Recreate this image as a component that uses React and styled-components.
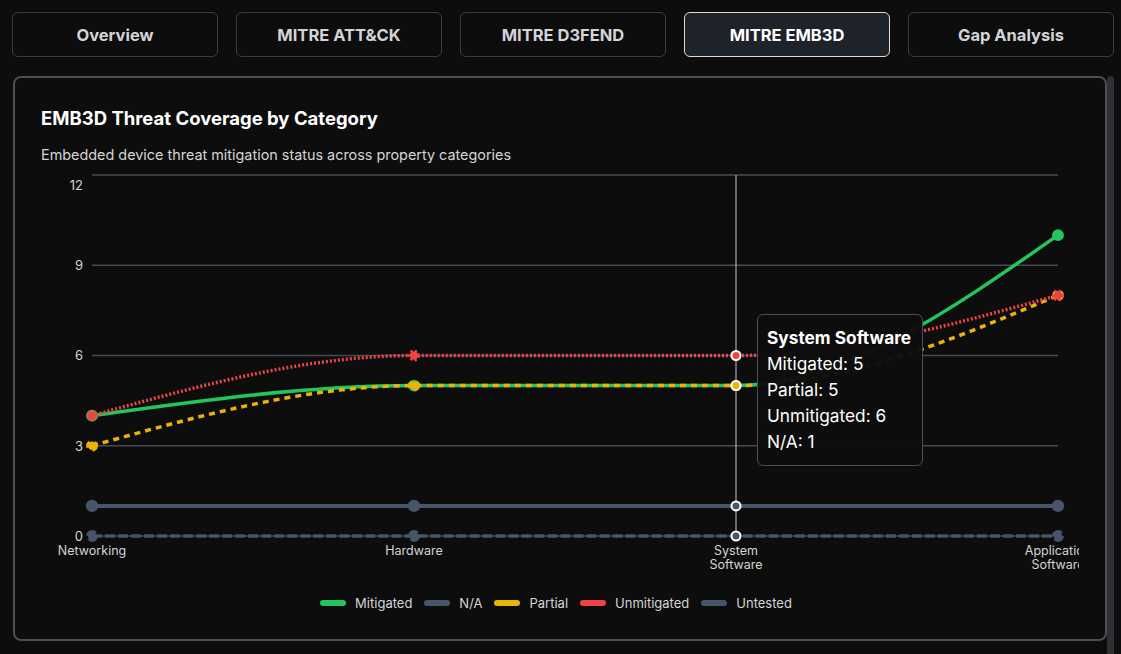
import React from 'react';
import styled, { createGlobalStyle } from 'styled-components';

const GlobalStyle = createGlobalStyle`
  html, body {
    margin: 0;
    padding: 0;
    background: #0d0d0d;
    overflow: hidden;
  }
  body {
    font-family: Inter, "Noto Sans", "Liberation Sans", sans-serif;
    color: #f5f5f5;
  }
  * { box-sizing: border-box; }
`

const Page = styled.div`
  padding: 12px 7px 0 12px;
  height: 100vh;
  display: flex;
  flex-direction: column;
`

const TabBar = styled.div`
  display: grid;
  grid-template-columns: repeat(5, 1fr);
  gap: 18px;
`

const Tab = styled.button`
  height: 45px;
  border-radius: 6px;
  border: 1px solid ${(p) => (p.$active ? '#dcdcdc' : '#3a3d42')};
  background: ${(p) => (p.$active ? '#1e232a' : 'transparent')};
  color: ${(p) => (p.$active ? '#ffffff' : '#d4d4d8')};
  font-family: inherit;
  font-size: 16.5px;
  font-weight: 700;
  cursor: pointer;
`

const ContentRow = styled.div`
  flex: 1;
  display: flex;
  margin-top: 19px;
  min-height: 0;
`

const Card = styled.section`
  flex: 1;
  align-self: flex-start;
  margin-left: 1px;
  border: 2px solid #4b4e53;
  border-radius: 8px;
  padding: 26px 26px 26px;
  background: #0d0d0d;
`

const ScrollThumb = styled.div`
  width: 7px;
  background: #2e3033;
  border-radius: 4px 4px 0 0;
`

const Title = styled.h2`
  margin: 0;
  font-size: 18.5px;
  line-height: 28px;
  font-weight: 700;
  color: #ffffff;
`

const Subtitle = styled.p`
  margin: 13px 0 0;
  font-size: 14.4px;
  line-height: 20px;
  color: #d4d4d4;
`

const ChartWrap = styled.div`
  position: relative;
  margin-top: 3px;
  height: 408px;
`

const ChartSvg = styled.svg`
  display: block;
  width: 100%;
  height: 100%;
  overflow: hidden;
`

const Tooltip = styled.div`
  position: absolute;
  width: 166px;
  padding: 10px 9px 10px;
  border: 1.5px solid #4a4e55;
  border-radius: 6px;
  background: rgba(13, 13, 13, 0.97);
  pointer-events: none;
`

const TipTitle = styled.div`
  font-size: 17.3px;
  line-height: 26px;
  font-weight: 700;
  color: #ffffff;
  white-space: nowrap;
`

const TipRow = styled.div`
  font-size: 17.3px;
  line-height: 26px;
  color: #ffffff;
  white-space: nowrap;
`

const Legend = styled.ul`
  list-style: none;
  margin: 17px 0 0;
  padding: 0 8px 0 0;
  height: 20px;
  display: flex;
  justify-content: center;
  align-items: center;
  gap: 12px;
`

const LegendItem = styled.li`
  display: flex;
  align-items: center;
  gap: 9px;
  font-size: 13px;
  color: #d4d4d4;
`

const Swatch = styled.span`
  width: 26px;
  height: 6px;
  border-radius: 3px;
  background: ${(p) => p.$color};
`

const tabs = ['Overview', 'MITRE ATT&CK', 'MITRE D3FEND', 'MITRE EMB3D', 'Gap Analysis']

const categories = [['Networking'], ['Hardware'], ['System', 'Software'], ['Application', 'Software']]

const series = [
  { key: 'Mitigated', color: '#22c55e', width: 3.5, dash: null, values: [4, 5, 5, 10] },
  { key: 'N/A', color: '#475569', width: 4, dash: null, values: [1, 1, 1, 1] },
  { key: 'Partial', color: '#eab308', width: 3.5, dash: '6 5', values: [3, 5, 5, 8] },
  { key: 'Unmitigated', color: '#ef4444', width: 3.5, dash: '2 2', values: [4, 6, 6, 8] },
  { key: 'Untested', color: '#475569', width: 3.5, dash: '10 3', values: [0, 0, 0, 0] },
]

const X0 = 51
const X1 = 1016
const Y0 = 368
const UNIT = (368 - 7) / 12
const xAt = (i) => X0 + ((X1 - X0) / 3) * i
const yAt = (v) => Y0 - v * UNIT
const ACTIVE = 2

// monotone-x curve, same maths as d3's curveMonotoneX
const sign = (v) => (v < 0 ? -1 : 1)
const monotonePath = (pts) => {
  const n = pts.length
  const t = new Array(n).fill(0)
  for (let i = 1; i < n - 1; i++) {
    const [x0, y0] = pts[i - 1]
    const [x1, y1] = pts[i]
    const [x2, y2] = pts[i + 1]
    const h0 = x1 - x0
    const h1 = x2 - x1
    const s0 = (y1 - y0) / h0
    const s1 = (y2 - y1) / h1
    const p = (s0 * h1 + s1 * h0) / (h0 + h1)
    t[i] = (sign(s0) + sign(s1)) * Math.min(Math.abs(s0), Math.abs(s1), 0.5 * Math.abs(p)) || 0
  }
  const first = (pts[1][1] - pts[0][1]) / (pts[1][0] - pts[0][0])
  t[0] = (3 * first - t[1]) / 2
  const last = (pts[n - 1][1] - pts[n - 2][1]) / (pts[n - 1][0] - pts[n - 2][0])
  t[n - 1] = (3 * last - t[n - 2]) / 2
  let d = `M${pts[0][0]},${pts[0][1]}`
  for (let i = 1; i < n; i++) {
    const [xa, ya] = pts[i - 1]
    const [xb, yb] = pts[i]
    const dx = (xb - xa) / 3
    d += `C${xa + dx},${ya + dx * t[i - 1]},${xb - dx},${yb - dx * t[i]},${xb},${yb}`
  }
  return d
}

const EmbedChart = () => (
  <ChartWrap>
    <ChartSvg viewBox="0 0 1037 408" preserveAspectRatio="none">
      {[0, 3, 6, 9, 12].map((v) => (
        <line key={v} x1={X0} x2={X1} y1={yAt(v)} y2={yAt(v)} stroke="#474b51" strokeWidth="1.5" />
      ))}
      {[0, 3, 6, 9, 12].map((v) => (
        <text
          key={v}
          x={42}
          y={v === 12 ? 17 : yAt(v)}
          textAnchor="end"
          dominantBaseline="central"
          fontSize="13"
          fill="#d4d4d4"
        >
          {v}
        </text>
      ))}
      {categories.map((lines, i) => (
        <text key={i} x={xAt(i)} y={383} textAnchor="middle" fontSize="12.5" fill="#d4d4d4">
          {lines.map((l, j) => (
            <tspan key={l} x={xAt(i)} dy={j === 0 ? 4.5 : 13.5}>{l}</tspan>
          ))}
        </text>
      ))}
      <line x1={xAt(ACTIVE)} x2={xAt(ACTIVE)} y1={yAt(12)} y2={yAt(0)} stroke="#c8c8c8" strokeWidth="1" />
      {series.map((s) => {
        const pts = s.values.map((v, i) => [xAt(i), yAt(v)])
        return (
          <g key={s.key}>
            <path
              d={monotonePath(pts)}
              fill="none"
              stroke={s.color}
              strokeWidth={s.width}
              strokeDasharray={s.dash || undefined}
            />
            {pts.map(([x, y], i) => (i === ACTIVE ? null : (
              <circle
                key={i}
                cx={x}
                cy={y}
                r="4.2"
                fill={s.color}
                stroke={s.color}
                strokeWidth={s.width}
                strokeDasharray={s.dash || undefined}
              />
            )))}
          </g>
        )
      })}
      {series.map((s) => (
        <circle
          key={s.key}
          cx={xAt(ACTIVE)}
          cy={yAt(s.values[ACTIVE])}
          r="4.5"
          fill={s.color}
          stroke="#ffffff"
          strokeWidth="2"
        />
      ))}
    </ChartSvg>
    <Tooltip style={{ left: 716, top: 146 }}>
      <TipTitle>System Software</TipTitle>
      <TipRow>Mitigated: 5</TipRow>
      <TipRow>Partial: 5</TipRow>
      <TipRow>Unmitigated: 6</TipRow>
      <TipRow>N/A: 1</TipRow>
    </Tooltip>
  </ChartWrap>
)

const App = () => (
  <>
    <GlobalStyle />
    <Page>
      <TabBar>
        {tabs.map((t) => (
          <Tab key={t} $active={t === 'MITRE EMB3D'}>{t}</Tab>
        ))}
      </TabBar>
      <ContentRow>
        <Card>
          <Title>EMB3D Threat Coverage by Category</Title>
          <Subtitle>Embedded device threat mitigation status across property categories</Subtitle>
          <EmbedChart />
          <Legend>
            {series.map((s) => (
              <LegendItem key={s.key}>
                <Swatch $color={s.color} />
                {s.key}
              </LegendItem>
            ))}
          </Legend>
        </Card>
        <ScrollThumb />
      </ContentRow>
    </Page>
  </>
)

export default App
